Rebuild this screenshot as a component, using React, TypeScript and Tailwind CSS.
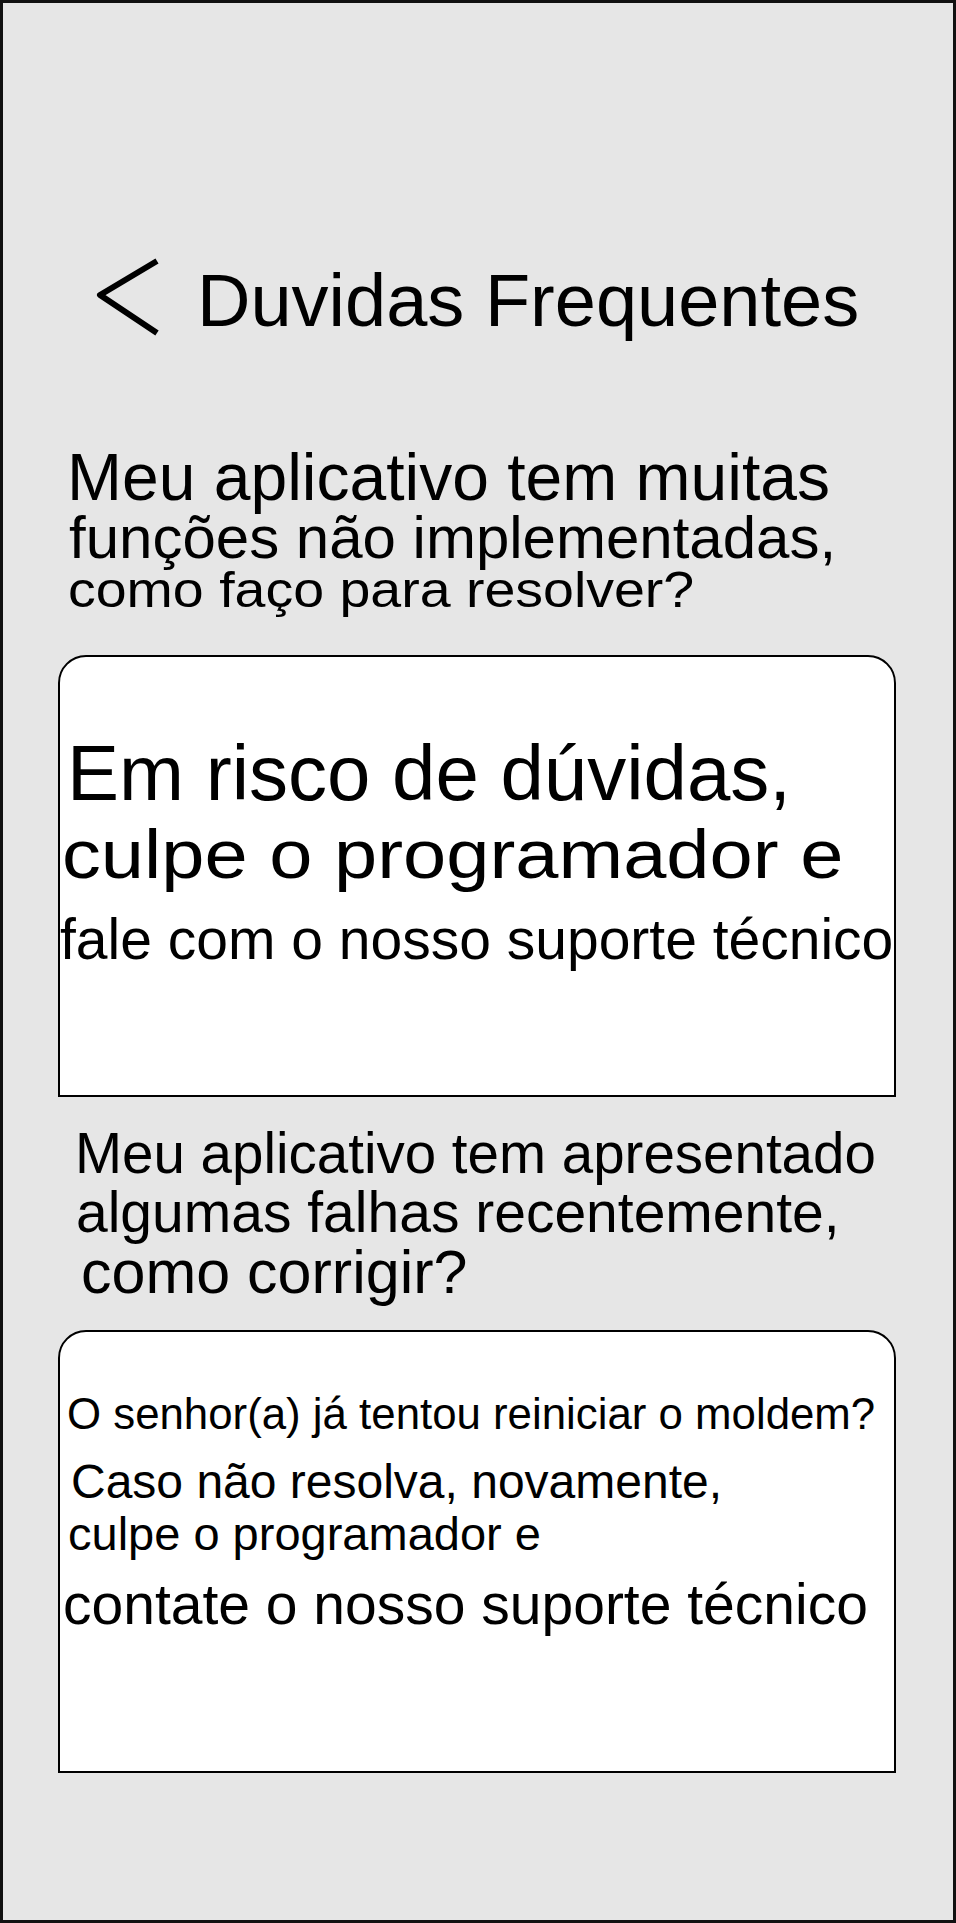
export default function App() {
  return (
    <div className="w-[956px] h-[1923px] overflow-hidden border-[3px] border-[#111] bg-[#e6e6e6] font-['Liberation_Sans',Arial,sans-serif] text-black">
      {/* header */}
      <div className="flex items-start mt-[253px] ml-[91px]">
        <svg width="66" height="82" viewBox="0 0 66 82" fill="none">
          <polyline
            points="63,5 6,39 63,77"
            stroke="#000"
            strokeWidth="6"
            strokeLinejoin="round"
          />
        </svg>
        <h1 className="ml-[37px] mt-[8px] text-[74px] leading-none font-normal whitespace-nowrap">
          Duvidas Frequentes
        </h1>
      </div>

      {/* pergunta 1 */}
      <div className="mt-[110px] whitespace-nowrap">
        <div className="ml-[64px] text-[66px] leading-[0.9]">Meu aplicativo tem muitas</div>
        <div className="ml-[66px] mt-[4px] text-[60px] leading-[0.9]">funções não implementadas,</div>
        <div className="w-fit ml-[65px] mt-[3px] text-[50px] leading-[0.9] scale-x-[1.11] origin-left">
          como faço para resolver?
        </div>
      </div>

      <div className="mt-[42px] ml-[55px] w-[838px] h-[442px] bg-white border-2 border-black rounded-t-[28px] whitespace-nowrap">
        <div className="mt-[77px] ml-[7px] text-[78px] leading-none">Em risco de dúvidas,</div>
        <div className="w-fit mt-[8px] ml-[2px] text-[68px] leading-none scale-x-[1.142] origin-left">
          culpe o programador e
        </div>
        <div className="mt-[23px] text-[57px] leading-none">fale com o nosso suporte técnico</div>
      </div>

      {/* pergunta 2 */}
      <div className="mt-[29px] whitespace-nowrap">
        <div className="ml-[72px] text-[56.5px] leading-none">Meu aplicativo tem apresentado</div>
        <div className="ml-[73px] mt-[1px] text-[57px] leading-none">algumas falhas recentemente,</div>
        <div className="ml-[78px] mt-[1px] text-[61px] leading-none">como corrigir?</div>
      </div>

      <div className="mt-[27px] ml-[55px] w-[838px] h-[443px] bg-white border-2 border-black rounded-t-[28px] whitespace-nowrap">
        <div className="mt-[60px] ml-[7px] text-[43.8px] leading-none">O senhor(a) já tentou reiniciar o moldem?</div>
        <div className="mt-[22px] ml-[11px] text-[48px] leading-none">Caso não resolva, novamente,</div>
        <div className="mt-[4px] ml-[8px] text-[47px] leading-none">culpe o programador e</div>
        <div className="mt-[19px] ml-[3px] text-[57px] leading-none">contate o nosso suporte técnico</div>
      </div>
    </div>
  );
}
